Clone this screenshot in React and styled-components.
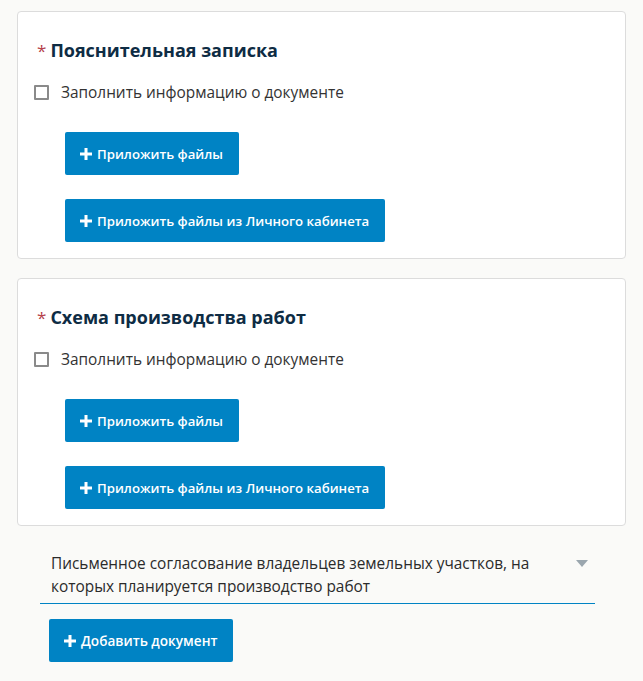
import React from "react";
import styled, { createGlobalStyle } from "styled-components";

const Global = createGlobalStyle`
  html, body { margin: 0; padding: 0; background: #fafaf8; }
  body { font-family: "Open Sans", "Liberation Sans", sans-serif; color: #2b2b2b; }
  * { box-sizing: border-box; }
`;

const Page = styled.div`
  padding: 11px 17px 16px 17px;
  display: flex;
  flex-direction: column;
  gap: 19px;
`;

const Card = styled.section`
  background: #fff;
  border: 1px solid #dcdcdc;
  border-radius: 4px;
  padding: 25px 16px 16px 16px;
  display: flex;
  flex-direction: column;
`;

const Title = styled.h2`
  margin: 0 0 0 3px;
  font-size: 18px;
  line-height: 26px;
  font-weight: 700;
  color: #0e2c44;
  display: flex;
  align-items: baseline;
  gap: 4px;
`;

const Required = styled.span`
  color: #b5414a;
  font-weight: 400;
  font-size: 17px;
`;

const CheckRow = styled.label`
  margin-top: 18px;
  display: flex;
  align-items: center;
  gap: 12px;
  height: 20px;
  font-size: 15.4px;
  color: #333;
  cursor: pointer;
`;

const Box = styled.span`
  width: 15px;
  height: 15px;
  border: 2px solid #8a8a8a;
  border-radius: 1px;
  background: #fff;
  flex: none;
`;

const Buttons = styled.div`
  margin-top: 30px;
  margin-left: 31px;
  display: flex;
  flex-direction: column;
  align-items: flex-start;
  gap: 24px;
`;

const Button = styled.button`
  height: 43px;
  padding: 0 16px 0 15px;
  border: none;
  border-radius: 2px;
  background: #0083c4;
  color: #fff;
  font-family: "Open Sans", "Liberation Sans", sans-serif;
  font-size: ${(p) => (p.$large ? "13.6px" : "13.2px")};
  font-weight: 600;
  display: inline-flex;
  align-items: center;
  gap: 5px;
  cursor: pointer;
`;

const Plus = () => (
  <svg width="12" height="12" viewBox="0 0 12 12" aria-hidden="true">
    <path d="M4.5 0h3v4.5H12v3H7.5V12h-3V7.5H0v-3h4.5z" fill="#fff" />
  </svg>
);

const Bottom = styled.div`
  margin-top: 1px;
  padding-left: 23px;
  padding-right: 31px;
  display: flex;
  flex-direction: column;
  align-items: flex-start;
  gap: 15px;
`;

const Select = styled.div`
  align-self: stretch;
  border-bottom: 1px solid #0083c4;
  padding: 6px 7px 5px 11px;
  display: flex;
  align-items: flex-start;
  justify-content: space-between;
  gap: 20px;
`;

const SelectText = styled.div`
  font-size: 15.4px;
  line-height: 23px;
  color: #2b2b2b;
`;

const Caret = styled.span`
  margin-top: 8px;
  width: 0;
  height: 0;
  border-left: 6px solid transparent;
  border-right: 6px solid transparent;
  border-top: 7px solid #9aa6ae;
  flex: none;
`;

const AddButton = styled(Button)`
  margin-left: 9px;
`;

const DocCard = ({ title }) => (
  <Card>
    <Title>
      <Required>*</Required>
      {title}
    </Title>
    <CheckRow>
      <Box />
      Заполнить информацию о документе
    </CheckRow>
    <Buttons>
      <Button>
        <Plus />
        Приложить файлы
      </Button>
      <Button>
        <Plus />
        Приложить файлы из Личного кабинета
      </Button>
    </Buttons>
  </Card>
);

export default function App() {
  return (
    <>
      <Global />
      <Page>
        <DocCard title="Пояснительная записка" />
        <DocCard title="Схема производства работ" />
        <Bottom>
          <Select>
            <SelectText>
              Письменное согласование владельцев земельных участков, на
              <br />
              которых планируется производство работ
            </SelectText>
            <Caret />
          </Select>
          <AddButton $large>
            <Plus />
            Добавить документ
          </AddButton>
        </Bottom>
      </Page>
    </>
  );
}
